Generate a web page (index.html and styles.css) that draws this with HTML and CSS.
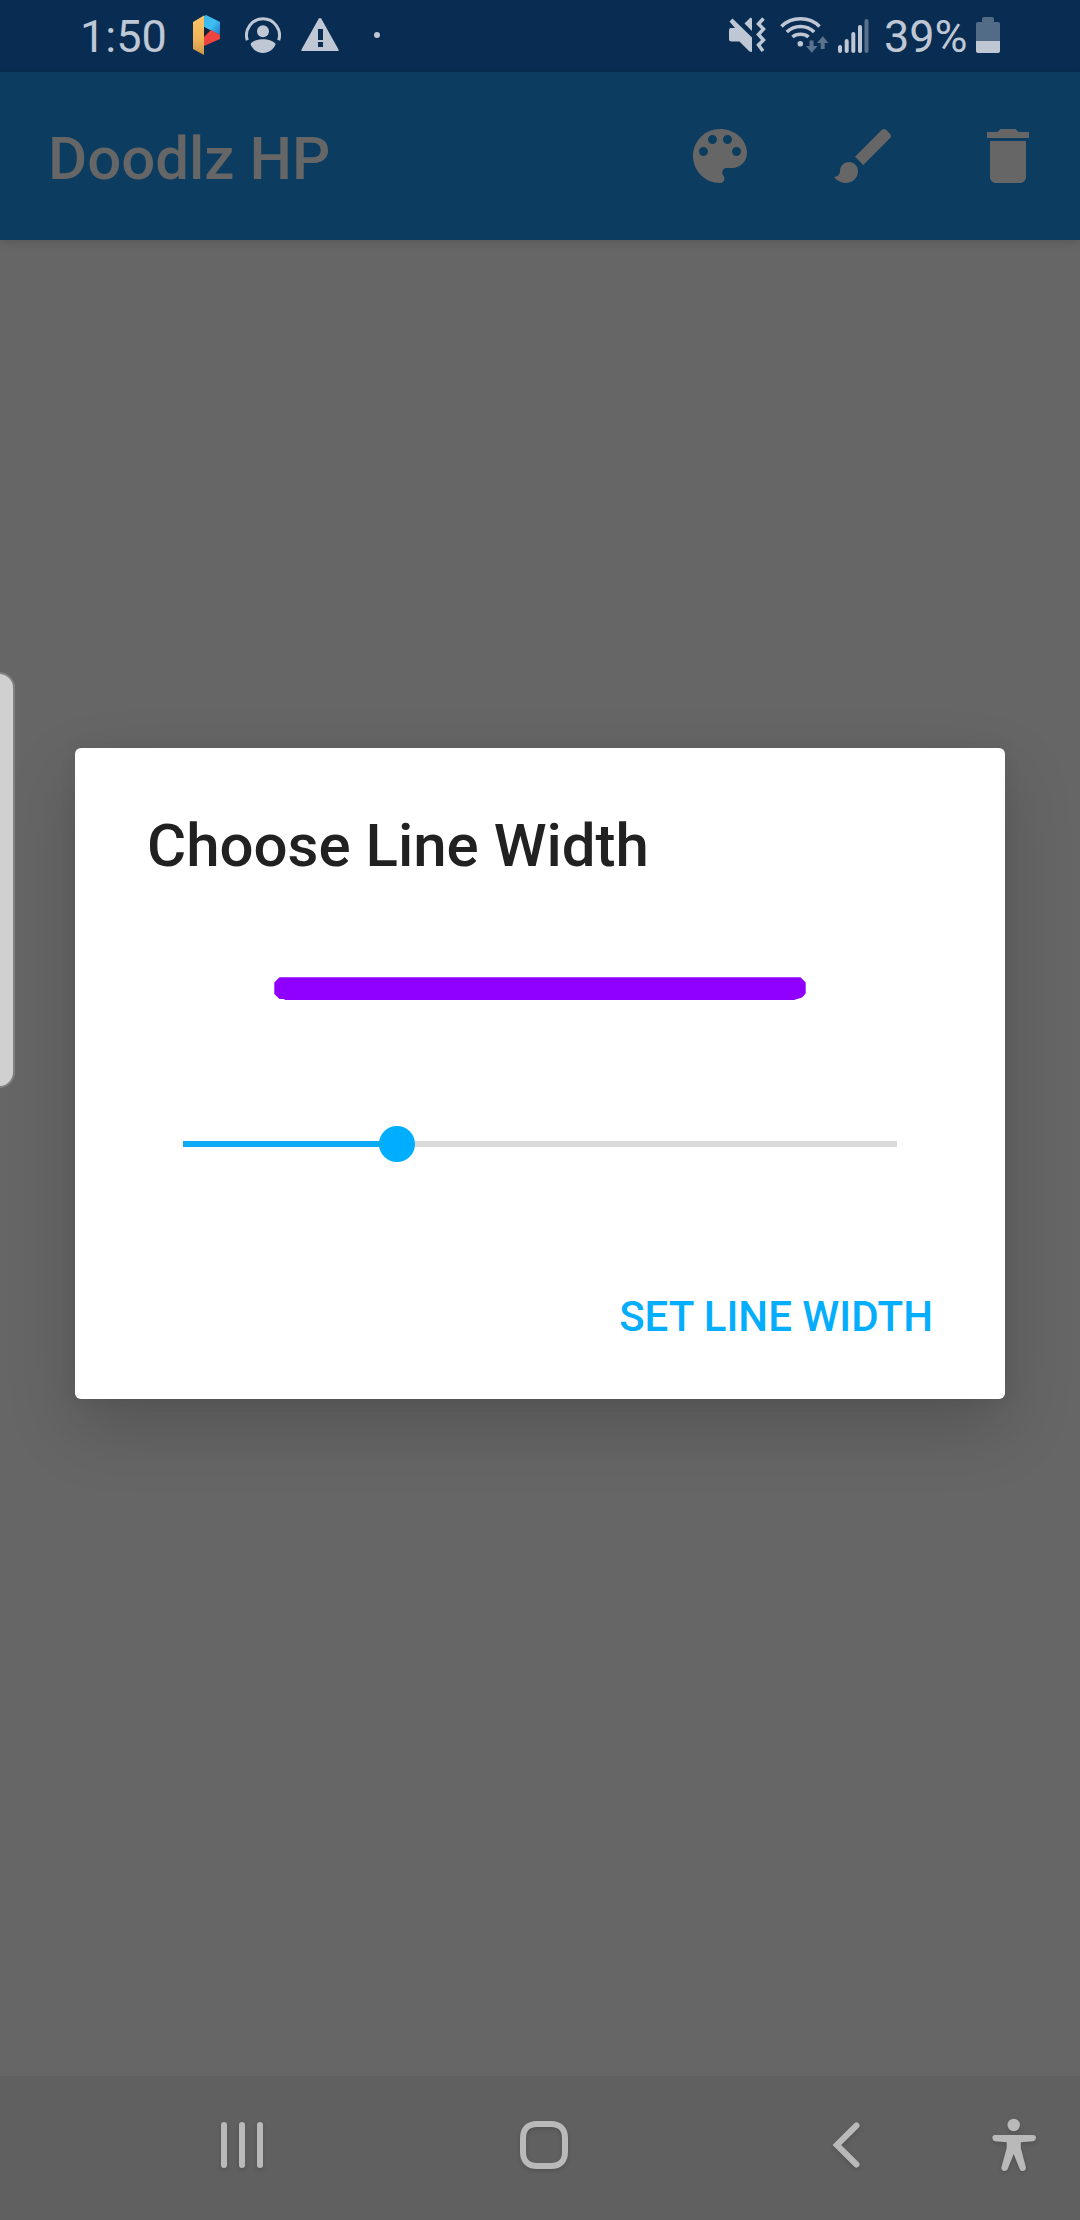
FILE: index.html
```html
<!DOCTYPE html>
<html lang="en">
<head>
<meta charset="utf-8">
<title>Doodlz HP</title>
<link rel="stylesheet" href="styles.css">
</head>
<body>
<div class="screen">
  <header class="status-bar">
    <span class="clock">1:50</span>
    <svg class="icon-app" width="30" height="44" viewBox="192 13 30 44">
      <defs>
        <linearGradient id="gold" x1="0" y1="0" x2="0" y2="1"><stop offset="0" stop-color="#fdc568"/><stop offset=".6" stop-color="#efb458"/><stop offset="1" stop-color="#c8964a"/></linearGradient>
        <linearGradient id="sky" x1="0" y1="0" x2="1" y2="1"><stop offset="0" stop-color="#3cb4e8"/><stop offset=".5" stop-color="#3fc0f4"/><stop offset="1" stop-color="#1c78c4"/></linearGradient>
      </defs>
      <path d="M204 16 206 15 220 22V35L204 27Z" fill="url(#sky)"/>
      <path d="M204 27 213 32 204 37Z" fill="#172238"/>
      <path d="M211 30 220 35V39L204 46V37Z" fill="#ee443f"/>
      <path d="M193 22 204 15.500V55L193 49Z" fill="url(#gold)"/>
    </svg>
    <svg class="icon-account" width="36" height="36" viewBox="245 17 36 36">
      <path d="M247.300 40.300A16.500 16.500 0 1 1 278.700 40.300" fill="none" stroke="#bfc7d5" stroke-width="3"/>
      <circle cx="263" cy="31.300" r="6" fill="#bfc7d5"/>
      <path d="M250.500 44C252.500 41 257.500 39.300 263 39.300S273.500 41 275.700 44C273.500 49.500 269 53 263 53S252.500 49.500 250.500 44Z" fill="#bfc7d5"/>
    </svg>
    <svg class="icon-warning" width="38" height="34" viewBox="301 18 38 34">
      <path d="M318.800 18.600Q320 17.400 321.200 18.600L338.500 49.500Q339 51 337.500 51H302.500Q301 51 301.500 49.500ZM318 29V40H323V29ZM318 42V47H323V42Z" fill="#bfc7d5" fill-rule="evenodd"/>
    </svg>
    <span class="more-dot"></span>
    <svg class="icon-mute" width="38" height="38" viewBox="728 16 38 38" fill="#bfc7d5">
      <path d="M730.500 28H735L729.500 21.500 732.500 18.500 752 37.500V52L749.500 51.500 739.500 41.500H731.500Q729 41.500 729 39V30.500Q729 28 730.500 28Z"/>
      <path d="M744.500 23.500 750.500 17.500 752 18.500V31Z"/>
      <path d="M763.500 18.500 758.500 24 763.500 29 758.500 34.500 763.500 40 758.500 45 763 51" fill="none" stroke="#bfc7d5" stroke-width="3.500"/>
    </svg>
    <svg class="icon-wifi" width="50" height="38" viewBox="779 16 50 38">
      <g fill="none" stroke="#bfc7d5" stroke-width="3.600">
        <path d="M781.500 26.500Q789 18.800 800.500 18.800T819.500 26.500"/>
        <path d="M786.800 32Q792.500 26.500 800.500 26.500T814.200 32"/>
        <path d="M792.500 37Q795.500 34.300 800.500 34.300T808.500 37"/>
      </g>
      <circle cx="800.300" cy="43.700" r="2.800" fill="#bfc7d5"/>
      <path d="M809.500 40.500H813.500V46H817.500L811.700 52.800 806 46H809.500ZM820.700 49H824.700V43H828.500L822.800 36.300 817 43H820.700Z" fill="#5c738e"/>
    </svg>
    <svg class="icon-signal" width="32" height="36" viewBox="837 18 32 36">
      <g fill="#bfc7d5"><rect x="838" y="45" width="4" height="8" rx="2"/><rect x="844.700" y="39" width="4" height="14" rx="2"/><rect x="851.300" y="32" width="4" height="21" rx="2"/><rect x="858" y="25" width="4" height="28" rx="2"/></g>
      <rect x="864.500" y="19" width="4" height="34" rx="2" fill="#58708b"/>
    </svg>
    <span class="battery-level">39%</span>
    <svg class="icon-battery" width="24" height="36" viewBox="976 17 24 36">
      <path d="M976 24Q976 22 978 22H982V19Q982 17 984 17H992Q994 17 994 19V22H998Q1000 22 1000 24V41H976Z" fill="#526c87"/>
      <path d="M976 41H1000V51Q1000 53 998 53H978Q976 53 976 51Z" fill="#bfc7d5"/>
    </svg>
  </header>

  <div class="app-bar">
    <h1 class="app-title">Doodlz HP</h1>
    <div class="actions">
      <svg class="action" viewBox="0 0 24 24"><path d="M12 3c-4.970 0-9 4.030-9 9s4.030 9 9 9c.830 0 1.500-.670 1.500-1.500 0-.390-.150-.740-.390-1.010-.230-.260-.380-.610-.380-.990 0-.830.670-1.500 1.500-1.500H16c2.760 0 5-2.240 5-5 0-4.420-4.030-8-9-8zm-5.500 9c-.830 0-1.500-.670-1.500-1.500S5.670 9 6.500 9 8 9.670 8 10.500 7.330 12 6.500 12zm3-4C8.670 8 8 7.330 8 6.500S8.670 5 9.500 5s1.500.670 1.500 1.500S10.330 8 9.500 8zm5 0c-.830 0-1.500-.670-1.500-1.500S13.670 5 14.500 5s1.500.670 1.500 1.500S15.330 8 14.500 8zm3 4c-.830 0-1.500-.670-1.500-1.500S16.670 9 17.500 9s1.500.670 1.500 1.500-.670 1.500-1.500 1.500z"/></svg>
      <svg class="action" viewBox="0 0 24 24"><path d="M7 14c-1.660 0-3 1.340-3 3 0 1.310-1.160 2-2 2 .920 1.220 2.490 2 4 2 2.210 0 4-1.790 4-4 0-1.660-1.340-3-3-3zm13.710-9.370l-1.340-1.340c-.390-.390-1.020-.390-1.410 0L9 12.250 11.750 15l8.960-8.960c.390-.390.390-1.020 0-1.410z"/></svg>
      <svg class="action" viewBox="0 0 24 24"><path d="M6 19c0 1.100.9 2 2 2h8c1.100 0 2-.9 2-2V7H6v12zM19 4h-3.500l-1-1h-5l-1 1H5v2h14V4z"/></svg>
    </div>
  </div>

  <main class="canvas">
    <section class="dialog">
      <h2 class="dialog-title">Choose Line Width</h2>
      <svg class="preview" width="534" height="25" viewBox="273 976 534 25"><path d="M279.500 977.300H800.500L805.700 982.500V993.500L802 997.500 794 1000H285L284 999H279.500L274.300 994V982.500Z" fill="#9000ff"/></svg>
      <div class="slider">
        <div class="slider-fill" style="width:30%"></div>
        <div class="slider-thumb" style="left:30%"></div>
      </div>
      <button class="confirm">SET LINE WIDTH</button>
    </section>
  </main>

  <nav class="nav-bar">
    <svg class="nav-icon recents" width="42" height="46" viewBox="221 2122 42 46"><rect x="221" y="2122" width="6" height="46" rx="3"/><rect x="239" y="2122" width="6" height="46" rx="3"/><rect x="257" y="2122" width="6" height="46" rx="3"/></svg>
    <svg class="nav-icon home" width="48" height="48" viewBox="0 0 48 48"><path d="M17 3H31C40 3 45 8 45 17V31C45 40 40 45 31 45H17C8 45 3 40 3 31V17C3 8 8 3 17 3Z" fill="none" stroke="#b9b9b9" stroke-width="6"/></svg>
    <svg class="nav-icon back" width="28" height="46" viewBox="833 2122 28 46"><path d="M856.500 2125.500 836.800 2145 856.500 2164.500" fill="none" stroke="#b9b9b9" stroke-width="6" stroke-linecap="round"/></svg>
    <svg class="nav-icon person" width="44" height="53" viewBox="992 2119 44 53"><circle cx="1013.700" cy="2125" r="6.200"/><path d="M995 2135H1033C1037 2135 1037 2140.500 1033 2141.200L1020.800 2142.200V2148L1025.800 2167C1026.500 2171.500 1021 2172.500 1019.700 2169L1013.700 2154 1007.700 2169C1006 2172.500 1000.500 2171.500 1001.500 2167L1006.700 2148V2142.200L995 2141.200C991.500 2140.500 991.500 2135 995 2135Z"/></svg>
  </nav>

  <div class="edge-handle"></div>
</div>
</body>
</html>
```
FILE: styles.css
```css
* { box-sizing: border-box; }
body { margin: 0; font-family: Roboto, sans-serif; }
svg { display: block; flex: none; }

.screen {
  position: relative;
  display: flex;
  flex-direction: column;
  width: 1080px;
  height: 2220px;
  overflow: hidden;
  background: #666;
}

.status-bar {
  display: flex;
  align-items: flex-start;
  height: 72px;
  padding-left: 80px;
  background: #092d52;
  color: #bfc7d5;
  font-size: 45px;
  line-height: 73px;
}
.clock { width: 112px; }
.icon-app { margin-top: 13px; }
.icon-account { margin: 17px 0 0 23px; }
.icon-warning { margin: 18px 0 0 20px; }
.more-dot { width: 6px; height: 6px; margin: 32px 0 0 35px; border-radius: 50%; background: #bfc7d5; }
.icon-mute { margin: 16px 0 0 348px; }
.icon-wifi { margin: 16px 0 0 13px; }
.icon-signal { margin: 18px 0 0 8px; }
.battery-level { width: 92px; margin-left: 15px; }
.icon-battery { margin-top: 17px; }

.app-bar {
  z-index: 1;
  display: flex;
  align-items: center;
  justify-content: space-between;
  height: 168px;
  padding: 0 36px 0 48px;
  background: #0c3c5f;
  box-shadow: 0 2px 8px rgba(0, 0, 0, .14);
}
.app-title { margin: 0; padding-top: 5px; color: #666; font-size: 60px; font-weight: 500; line-height: 72px; }
.actions { display: flex; gap: 72px; }
.action { width: 72px; height: 72px; fill: #666; }

.canvas { flex: 1; padding: 508px 75px 0; }
.dialog {
  display: flex;
  flex-direction: column;
  height: 651px;
  padding: 62px 72px 0;
  border-radius: 6px;
  background: #fff;
  box-shadow: 0 28px 68px rgba(0, 0, 0, .18), 0 0 18px rgba(0, 0, 0, .06);
}
.dialog-title { margin: 0; color: #212121; font-size: 60px; font-weight: 500; line-height: 72px; }
.preview { margin: 94px 0 0 126px; }
.slider { position: relative; width: 714px; height: 6px; margin: 140px 0 0 36px; background: #dadada; }
.slider-fill { height: 6px; background: #0dabf6; }
.slider-thumb { position: absolute; top: -15px; width: 36px; height: 36px; margin-left: -18px; border-radius: 50%; background: #00aeff; }
.confirm {
  align-self: flex-end;
  margin: 144px 0 0;
  padding: 0;
  border: 0;
  background: none;
  color: #05adfd;
  font: 500 42px/52px Roboto, sans-serif;
}

.nav-bar { display: flex; align-items: center; height: 144px; padding: 0 44px 6px 221px; background: #606060; }
.nav-icon { fill: #b9b9b9; overflow: visible; filter: drop-shadow(0 2px 2px rgba(0, 0, 0, .15)); }
.home { margin-left: 257px; }
.back { margin-left: 265px; }
.person { margin-left: 131px; }

.edge-handle {
  position: absolute;
  left: -20px;
  top: 672px;
  width: 35px;
  height: 416px;
  border: 2px solid #828282;
  border-radius: 16px;
  background: #d0d0d0;
}
```
